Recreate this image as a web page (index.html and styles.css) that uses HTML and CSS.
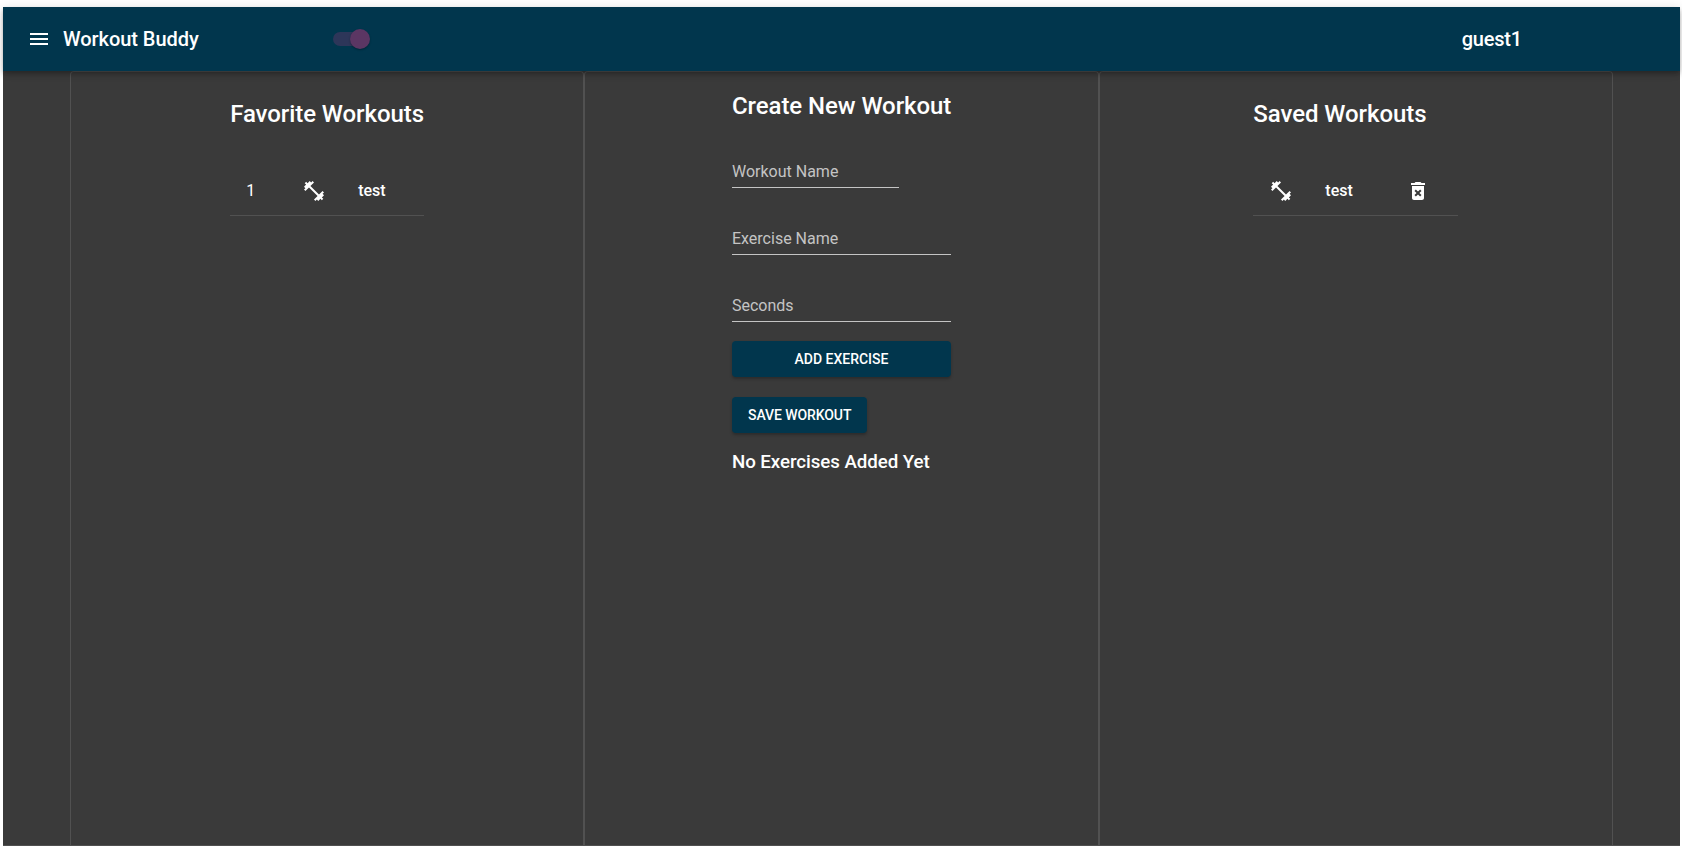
FILE: index.html
```html
<!DOCTYPE html>
<html lang="en">
<head>
<meta charset="utf-8">
<title>Workout Buddy</title>
<link rel="stylesheet" href="styles.css">
</head>
<body>
<div class="app">
  <header class="bar">
    <svg class="menu" viewBox="0 0 24 24"><path d="M3 18h18v-2H3v2zm0-5h18v-2H3v2zm0-7v2h18V6H3z"/></svg>
    <h1 class="brand">Workout Buddy</h1>
    <div class="switch"><span class="thumb"></span></div>
    <span class="user">guest1</span>
  </header>
  <main class="columns">
    <section class="panel">
      <div class="content favorites">
        <h2 class="title">Favorite Workouts</h2>
        <div class="row">
          <span class="rank">1</span>
          <svg class="icon" viewBox="0 0 24 24"><use href="#dumbbell"/></svg>
          <span class="name">test</span>
        </div>
      </div>
    </section>
    <section class="panel">
      <form class="content create">
        <h2 class="title">Create New Workout</h2>
        <label class="field short">Workout Name</label>
        <label class="field">Exercise Name</label>
        <label class="field">Seconds</label>
        <button class="button wide" type="button">ADD EXERCISE</button>
        <button class="button" type="button">SAVE WORKOUT</button>
        <h3 class="empty">No Exercises Added Yet</h3>
      </form>
    </section>
    <section class="panel">
      <div class="content saved">
        <h2 class="title">Saved Workouts</h2>
        <div class="row">
          <svg class="icon" viewBox="0 0 24 24"><path id="dumbbell" d="M20.57 14.86 22 13.43 20.57 12 17 15.57 8.43 7 12 3.43 10.57 2 9.14 3.43 7.71 2 5.57 4.14 4.14 2.71 2.71 4.14l1.43 1.43L2 7.71l1.43 1.43L2 10.57 3.43 12 7 8.43 15.57 17 12 20.57 13.43 22l1.43-1.43L16.29 22l2.14-2.14 1.43 1.43 1.43-1.43-1.43-1.43L22 16.29z"/></svg>
          <span class="name">test</span>
          <svg class="icon trash" viewBox="0 0 24 24"><path fill-rule="evenodd" d="M6 19c0 1.1.9 2 2 2h8c1.1 0 2-.9 2-2V7H6v12zm2.46-7.12 1.41-1.41L12 12.59l2.12-2.12 1.41 1.41L13.41 14l2.12 2.12-1.41 1.41L12 15.41l-2.12 2.12-1.41-1.41L10.59 14l-2.13-2.12zM15.5 4l-1-1h-5l-1 1H5v2h14V4z"/></svg>
        </div>
      </div>
    </section>
  </main>
</div>
</body>
</html>
```
FILE: styles.css
```css
* { box-sizing: border-box; }
body {
  margin: 0;
  height: 846px;
  padding: 7px 2px 0 3px;
  overflow: hidden;
  background: #fff;
  color: #fff;
  font-family: Roboto, sans-serif;
}
h1, h2, h3 { margin: 0; font-weight: 500; }
svg { display: block; fill: currentColor; flex: none; }
.app {
  display: flex;
  flex-direction: column;
  height: 839px;
  background: #3a3a3a;
  border-bottom: 1px solid #505050;
}
.bar {
  position: relative;
  display: flex;
  align-items: center;
  flex: none;
  height: 64px;
  padding-left: 24px;
  background: #01364d;
  box-shadow: 0 2px 4px -1px rgba(0,0,0,.2), 0 4px 5px rgba(0,0,0,.14), 0 1px 10px rgba(0,0,0,.12);
}
.menu { width: 24px; height: 24px; }
.brand {
  width: 272px;
  margin-left: 12px;
  font-size: 20px;
  line-height: 32px;
  letter-spacing: -.05px;
}
.switch {
  display: flex;
  justify-content: flex-end;
  align-items: center;
  width: 36px;
  height: 14px;
  margin-left: -2px;
  border-radius: 7px;
  background: #2d3659;
}
.thumb {
  width: 20px;
  height: 20px;
  margin-right: -1px;
  border-radius: 50%;
  background: #5b3663;
  box-shadow: 0 1px 2px rgba(0,0,0,.3);
}
.user {
  margin-left: auto;
  margin-right: 158px;
  font-size: 20px;
  font-weight: 500;
  letter-spacing: -.2px;
}
.columns {
  display: grid;
  grid-template-columns: repeat(3, 1fr);
  flex: 1;
  width: 1543px;
  margin-left: 67px;
}
.panel {
  border: 1px solid #515151;
  border-bottom: 0;
  border-radius: 4px 4px 0 0;
  display: flex;
  justify-content: center;
  align-items: flex-start;
}
.title { font-size: 24px; line-height: 32px; letter-spacing: -.07px; white-space: nowrap; }
.favorites { width: 194px; padding-top: 26px; }
.saved { width: 205px; padding-top: 26px; }
.row {
  display: flex;
  align-items: center;
  height: 49px;
  margin-top: 37px;
  padding: 0 16px;
  border-bottom: 1px solid #515151;
}
.icon { width: 24px; height: 24px; }
.rank { width: 56px; font-size: 16px; padding-bottom: 2px; }
.name { font-size: 16px; font-weight: 500; margin-left: 32px; padding-bottom: 2px; }
.trash { margin-left: 53px; }
.create {
  display: flex;
  flex-direction: column;
  align-items: flex-start;
  width: 219px;
  padding-top: 18px;
}
.field {
  width: 100%;
  height: 31px;
  margin-top: 36px;
  border-bottom: 1px solid #c4c4c4;
  color: #c4c4c4;
  font-size: 16px;
  line-height: 30px;
}
.field.short { width: 167px; margin-top: 35px; }
.field:not(.short) { line-height: 29px; }
.button {
  height: 36px;
  margin-top: 20px;
  padding: 0 16px;
  border: 0;
  border-radius: 4px;
  background: #01364d;
  color: #fff;
  font: 500 14px/24px Roboto, sans-serif;
  letter-spacing: -.08px;
  box-shadow: 0 2px 3px rgba(0,0,0,.25);
}
.button.wide { width: 100%; margin-top: 19px; letter-spacing: 0; }
.empty { margin-top: 13px; font-size: 18.72px; line-height: 32px; letter-spacing: -.06px; }
```
